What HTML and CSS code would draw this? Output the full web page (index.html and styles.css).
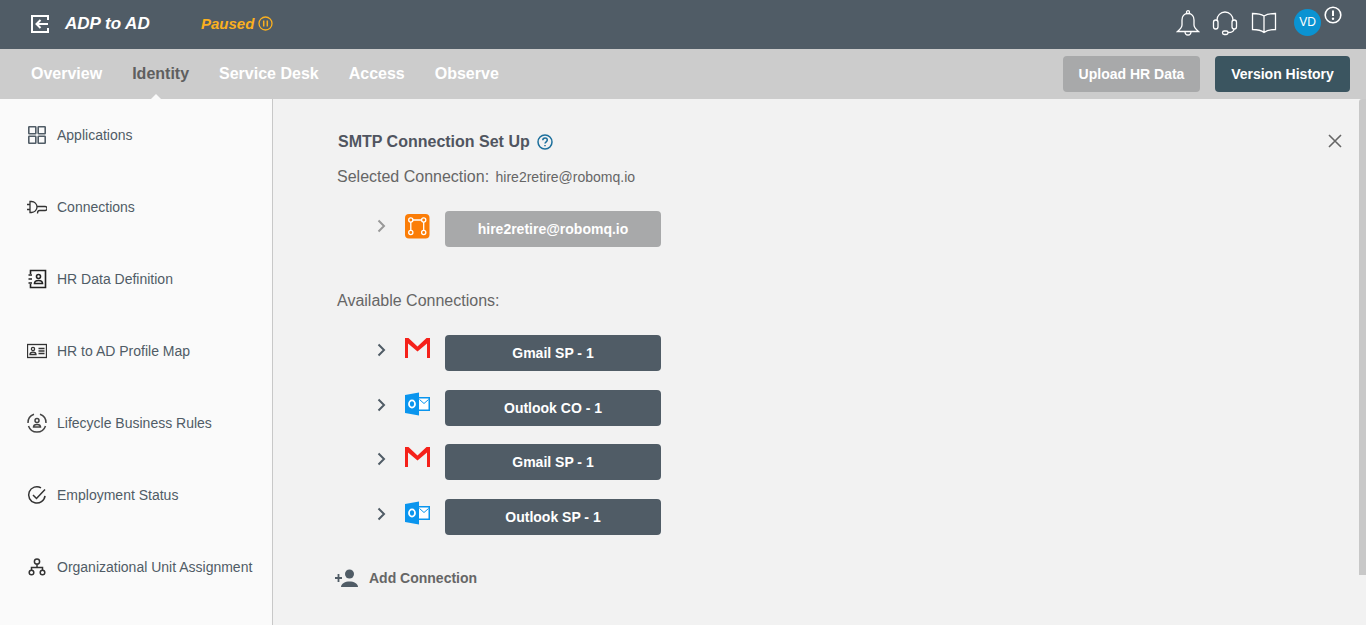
FILE: index.html
```html
<!DOCTYPE html>
<html lang="en">
<head>
    <meta charset="UTF-8">
    <meta name="viewport" content="width=device-width, initial-scale=1.0">
    <title>ADP to AD</title>
    <link rel="stylesheet" href="styles.css">
</head>
<body>
    <header class="topbar">
        <div class="topbar-left">
            <svg class="back-icon" width="20" height="20" viewBox="0 0 20 20" fill="none" stroke="#fff" stroke-width="2">
                <path d="M18 6V2H2v16h16v-4"/>
                <path d="M18 10H7M10.500 6L6.500 10l4 4"/>
            </svg>
            <span class="app-name">ADP to AD</span>
            <span class="status">Paused</span>
            <svg width="15" height="15" viewBox="0 0 15 15" fill="none" stroke="#fbb01f" stroke-width="1.300">
                <circle cx="7.500" cy="7.500" r="6.500"/>
                <path d="M5.700 4.500v6M9.300 4.500v6" stroke-width="1.500"/>
            </svg>
        </div>
        <div class="topbar-right">
            <svg width="24" height="26" viewBox="0 0 24 26" fill="none" stroke="#fff" stroke-width="1.300">
                <path d="M12 3.500c-4 0-6 3-6 6.500v5c0 2.500-1.500 4-4.500 6.500h21c-3-2.500-4.500-4-4.500-6.500v-5c0-3.500-2-6.500-6-6.500z"/>
                <circle cx="12" cy="2.200" r="1.500"/>
                <path d="M9 21.500a3 3.500 0 0 0 6 0"/>
            </svg>
            <svg width="26" height="26" viewBox="0 0 26 26" fill="none" stroke="#fff" stroke-width="1.300">
                <path d="M5 11V10a8 8 0 0 1 16 0v1"/>
                <rect x="1.500" y="10" width="4.500" height="9" rx="2.200"/>
                <rect x="20" y="10" width="4.500" height="9" rx="2.200"/>
                <path d="M22 19c0 2.500-2.500 3.500-6 3.500"/>
                <rect x="10.500" y="21" width="5.500" height="3.500" rx="1.700"/>
            </svg>
            <svg class="book-icon" width="26" height="22" viewBox="0 0 26 22" fill="none" stroke="#fff" stroke-width="1.300">
                <path d="M13 4C10 2 6 1.500 1.500 1.500v16c4.500 0 8.500.5 11.500 3 3-2.500 7-3 11.500-3v-16C20 1.500 16 2 13 4zM13 4v16.500"/>
            </svg>
            <div class="avatar-wrap">
                <span class="avatar">VD</span>
                <svg class="alert-icon" width="18" height="18" viewBox="0 0 18 18">
                    <circle cx="9" cy="9" r="7.800" fill="none" stroke="#fff" stroke-width="1.600"/>
                    <path d="M9 4.500v5.500" stroke="#fff" stroke-width="2"/>
                    <circle cx="9" cy="12.800" r="1.200" fill="#fff"/>
                </svg>
            </div>
        </div>
    </header>

    <nav class="tabs">
        <div class="tab-links">
            <a class="tab">Overview</a>
            <a class="tab active">Identity</a>
            <a class="tab">Service Desk</a>
            <a class="tab">Access</a>
            <a class="tab">Observe</a>
        </div>
        <div class="tab-buttons">
            <button class="btn btn-grey">Upload HR Data</button>
            <button class="btn btn-dark">Version History</button>
        </div>
    </nav>

    <div class="content">
        <aside class="sidebar">
            <div class="side-item">
                <svg width="20" height="20" viewBox="0 0 20 20" fill="none" stroke="#505c66" stroke-width="1.600">
                    <rect x="1.800" y="1.800" width="7" height="7" rx="0.500"/>
                    <rect x="11.200" y="1.800" width="7" height="7" rx="0.500"/>
                    <rect x="1.800" y="11.200" width="7" height="7" rx="0.500"/>
                    <rect x="11.200" y="11.200" width="7" height="7" rx="0.500"/>
                </svg>
                <span>Applications</span>
            </div>
            <div class="side-item">
                <svg width="20" height="20" viewBox="0 0 20 20" fill="none" stroke="#333" stroke-width="1.300">
                    <path d="M3 4.500h1.500a5.500 5.500 0 0 1 0 11H3zM0 7.500h3M0 12.500h3"/>
                    <path d="M10 9.500h8a2 2 0 0 1 0 4h-5.500c-1.300 0-2 .7-2 3"/>
                </svg>
                <span>Connections</span>
            </div>
            <div class="side-item">
                <svg width="20" height="20" viewBox="0 0 20 20" fill="none" stroke="#222" stroke-width="1.600">
                    <path d="M3.500 5V1.500h15v17h-15V15"/>
                    <path d="M1.500 6h3.500M1.500 10h3.500M1.500 14h3.500"/>
                    <circle cx="11.500" cy="7.500" r="2"/>
                    <path d="M7.500 14.500c0-4 8-4 8 0z"/>
                </svg>
                <span>HR Data Definition</span>
            </div>
            <div class="side-item">
                <svg width="20" height="20" viewBox="0 0 20 20" fill="none" stroke="#333" stroke-width="1.300">
                    <rect x="0.500" y="3.500" width="19" height="13"/>
                    <circle cx="6" cy="8" r="1.600"/>
                    <path d="M3 13.500c0-3.200 6-3.200 6 0zM11.500 7.500h6M11.500 10h6M11.500 12.500h6"/>
                </svg>
                <span>HR to AD Profile Map</span>
            </div>
            <div class="side-item">
                <svg width="20" height="20" viewBox="0 0 20 20" fill="none" stroke="#444" stroke-width="1.500">
                    <path d="M7 1.200A9 9 0 0 0 1 10M13 1.200A9 9 0 0 1 19 10M1.500 13a9 9 0 0 0 17 0"/>
                    <circle cx="10" cy="7.500" r="2"/>
                    <path d="M6.500 14c0-3.500 7-3.500 7 0z"/>
                </svg>
                <span>Lifecycle Business Rules</span>
            </div>
            <div class="side-item">
                <svg width="20" height="20" viewBox="0 0 20 20" fill="none" stroke="#333" stroke-width="1.500">
                    <path d="M14 2.800a8.200 8.200 0 1 0 4 8"/>
                    <path d="M6 10l3.500 3.500L18 4.500"/>
                </svg>
                <span>Employment Status</span>
            </div>
            <div class="side-item">
                <svg width="20" height="20" viewBox="0 0 20 20" fill="none" stroke="#333" stroke-width="1.500">
                    <circle cx="10" cy="4.500" r="2.600"/>
                    <circle cx="4.500" cy="15.500" r="2.300"/>
                    <circle cx="15.500" cy="15.500" r="2.300"/>
                    <path d="M10 7v3.500M4.500 13v-2.500h11V13"/>
                </svg>
                <span>Organizational Unit Assignment</span>
            </div>
        </aside>

        <main class="main">
            <svg class="close-icon" width="14" height="14" viewBox="0 0 14 14" stroke="#666" stroke-width="1.600">
                <path d="M1 1l12 12M13 1L1 13"/>
            </svg>
            <div class="scroll-thumb"></div>

            <h1 class="title">SMTP Connection Set Up
                <svg width="16" height="16" viewBox="0 0 16 16" fill="none" stroke="#1c6f9c" stroke-width="1.500">
                    <circle cx="8" cy="8" r="7"/>
                    <path d="M5.800 6.200c0-3 4.500-3 4.500-.2 0 1.800-2.300 1.800-2.300 3.600"/>
                    <path d="M8 11v1.300" stroke-width="1.500"/>
                </svg>
            </h1>
            <p class="label selected-label">Selected Connection: <span class="selected-name">hire2retire@robomq.io</span></p>

            <div class="conn-row">
                <svg class="chevron" width="10" height="14" viewBox="0 0 10 14" fill="none" stroke="#999" stroke-width="2"><path d="M1.500 1.500L7 7l-5.500 5.500"/></svg>
                <svg class="conn-icon" width="26" height="26" viewBox="0 0 26 26">
                    <rect x="1" y="1" width="24.500" height="24.500" rx="4" fill="#fb7d07"/>
                    <g fill="none" stroke="#fff" stroke-width="1.300">
                        <circle cx="6.800" cy="7" r="2.100"/>
                        <circle cx="19.700" cy="7" r="2.100"/>
                        <circle cx="6.800" cy="19.500" r="2.100"/>
                        <circle cx="19.700" cy="19.500" r="2.100"/>
                        <path d="M8.900 7h8.700M6.800 9.100v8.300M19.700 9.100v8.300"/>
                    </g>
                </svg>
                <button class="conn-btn selected">hire2retire@robomq.io</button>
            </div>

            <p class="label available-label">Available Connections:</p>

            <div class="conn-list">
                <div class="conn-row">
                    <svg class="chevron" width="10" height="14" viewBox="0 0 10 14" fill="none" stroke="#505c66" stroke-width="2"><path d="M1.500 1.500L7 7l-5.500 5.500"/></svg>
                    <svg class="conn-icon" width="26" height="26" viewBox="0 0 26 26"><use href="#gmail"/></svg>
                    <button class="conn-btn">Gmail SP - 1</button>
                </div>
                <div class="conn-row">
                    <svg class="chevron" width="10" height="14" viewBox="0 0 10 14" fill="none" stroke="#505c66" stroke-width="2"><path d="M1.500 1.500L7 7l-5.500 5.500"/></svg>
                    <svg class="conn-icon" width="26" height="26" viewBox="0 0 26 26"><use href="#outlook"/></svg>
                    <button class="conn-btn">Outlook CO - 1</button>
                </div>
                <div class="conn-row">
                    <svg class="chevron" width="10" height="14" viewBox="0 0 10 14" fill="none" stroke="#505c66" stroke-width="2"><path d="M1.500 1.500L7 7l-5.500 5.500"/></svg>
                    <svg class="conn-icon" width="26" height="26" viewBox="0 0 26 26"><use href="#gmail"/></svg>
                    <button class="conn-btn">Gmail SP - 1</button>
                </div>
                <div class="conn-row">
                    <svg class="chevron" width="10" height="14" viewBox="0 0 10 14" fill="none" stroke="#505c66" stroke-width="2"><path d="M1.500 1.500L7 7l-5.500 5.500"/></svg>
                    <svg class="conn-icon" width="26" height="26" viewBox="0 0 26 26"><use href="#outlook"/></svg>
                    <button class="conn-btn">Outlook SP - 1</button>
                </div>
            </div>

            <div class="add-row">
                <svg width="24" height="18" viewBox="0 0 24 18" fill="#505c66">
                    <circle cx="14.500" cy="5" r="4.500"/>
                    <path d="M6 18c0-7.500 17-7.500 17 0z"/>
                    <path d="M3.500 5v8M0 9h7" stroke="#505c66" stroke-width="1.800"/>
                </svg>
                <span>Add Connection</span>
            </div>
        </main>
    </div>

    <svg class="icon-defs" width="0" height="0">
        <defs>
            <g id="gmail">
                <path d="M1 1h3.500L13.500 9.500 22.500 1H26v20h-3V6.500L13.500 14.500 4 6.500V21H1z" fill="#f5211a"/>
            </g>
            <g id="outlook">
                <path d="M1 3L15 0.500v23L1 21z" fill="#0a95ee"/>
                <ellipse cx="8" cy="12" rx="3" ry="3.600" fill="none" stroke="#fff" stroke-width="1.800"/>
                <rect x="15" y="5" width="11" height="14" fill="#0a95ee"/>
                <path d="M15 6.500h9.500v11H15z" fill="#fff"/>
                <path d="M15.500 7.500l4.500 4 4.500-4" fill="none" stroke="#0a95ee" stroke-width="1"/>
            </g>
        </defs>
    </svg>
</body>
</html>
```

FILE: styles.css
```css
* {
    box-sizing: border-box;
}
html, body {
    height: 100%;
}
body {
    margin: 0;
    font-family: 'Liberation Sans', Arial, sans-serif;
    overflow: hidden;
    background: #f2f2f2;
    display: flex;
    flex-direction: column;
}
.topbar {
    height: 49px;
    flex-shrink: 0;
    background: #505c66;
    display: flex;
    justify-content: space-between;
    align-items: center;
    padding: 0 34px 0 30px;
}
.topbar-left {
    display: flex;
    align-items: center;
    margin-bottom: 2px;
}
.back-icon {
    margin-right: 15px;
}
.app-name {
    color: #fff;
    font-size: 17px;
    font-weight: bold;
    font-style: italic;
    width: 136px;
}
.status {
    color: #fbb01f;
    font-size: 15px;
    font-weight: bold;
    font-style: italic;
    margin-right: 4px;
}
.topbar-right {
    display: flex;
    align-items: center;
    gap: 12px;
}
.topbar-right > svg {
    margin-bottom: 3px;
}
.book-icon {
    margin-left: 1px;
}
.avatar-wrap {
    position: relative;
    width: 38px;
    height: 27px;
    margin-left: 5px;
    margin-bottom: 4px;
}
.avatar {
    display: block;
    width: 27px;
    height: 27px;
    border-radius: 50%;
    background: #0a93d2;
    color: #fff;
    font-size: 12px;
    line-height: 27px;
    text-align: center;
}
.alert-icon {
    position: absolute;
    left: 30px;
    top: -3px;
}
.tabs {
    height: 50px;
    flex-shrink: 0;
    background: #cccccc;
    display: flex;
    justify-content: space-between;
    align-items: center;
    padding: 0 16px 0 31px;
}
.tab-links {
    display: flex;
    gap: 30px;
}
.tab {
    color: #fff;
    font-size: 16px;
    font-weight: bold;
    position: relative;
}
.tab.active {
    color: #5f5f5f;
}
.tab.active::after {
    content: "";
    position: absolute;
    left: 18px;
    bottom: -17px;
    border-left: 6px solid transparent;
    border-right: 6px solid transparent;
    border-bottom: 6px solid #fafafa;
}
.tab-buttons {
    display: flex;
    gap: 15px;
}
.btn {
    height: 36px;
    border: none;
    border-radius: 4px;
    color: #fff;
    font-family: inherit;
    font-size: 14px;
    font-weight: bold;
}
.btn-grey {
    width: 137px;
    background: #a8a9aa;
}
.btn-dark {
    width: 135px;
    background: #3b5560;
}
.content {
    flex: 1;
    display: flex;
    min-height: 0;
}
.sidebar {
    width: 273px;
    flex-shrink: 0;
    background: #fafafa;
    border-right: 1px solid #c8c8c8;
}
.side-item {
    height: 72px;
    display: flex;
    align-items: center;
    gap: 10px;
    padding-left: 27px;
    font-size: 14px;
    color: #505c66;
}
.main {
    flex: 1;
    position: relative;
    padding: 33px 0 0 64px;
}
.close-icon {
    position: absolute;
    right: 24px;
    top: 35px;
}
.scroll-thumb {
    position: absolute;
    right: 0;
    top: 0;
    width: 7px;
    height: 476px;
    background: #c8c8c8;
    border-radius: 3px 0 0 0;
}
.title {
    margin: 0 0 0 1px;
    height: 20px;
    font-size: 16px;
    font-weight: bold;
    color: #505560;
    display: flex;
    align-items: center;
    gap: 7px;
}
.label {
    margin: 0;
    font-size: 16px;
    line-height: 20px;
    color: #666;
}
.selected-label {
    margin-top: 15px;
}
.selected-name {
    font-size: 14px;
    margin-left: 2px;
}
.available-label {
    margin-top: 44px;
}
.conn-row {
    display: flex;
    align-items: center;
    height: 36px;
    padding-left: 40px;
}
.selected-label + .conn-row {
    margin-top: 24px;
}
.chevron {
    margin-right: 17px;
    position: relative;
    top: -3px;
}
.conn-icon {
    margin-right: 15px;
    position: relative;
    top: -3px;
}
.conn-btn {
    width: 216px;
    height: 36px;
    border: none;
    border-radius: 4px;
    background: #505c66;
    color: #fff;
    font-family: inherit;
    font-size: 14px;
    font-weight: bold;
}
.conn-btn.selected {
    background: #a8a9aa;
}
.conn-list {
    margin-top: 24px;
    display: flex;
    flex-direction: column;
    gap: 18.5px;
}
.add-row {
    margin-top: 34px;
    margin-left: -2px;
    display: flex;
    align-items: center;
    gap: 10px;
    font-size: 14px;
    font-weight: bold;
    color: #666;
}
.icon-defs {
    position: absolute;
}
```
